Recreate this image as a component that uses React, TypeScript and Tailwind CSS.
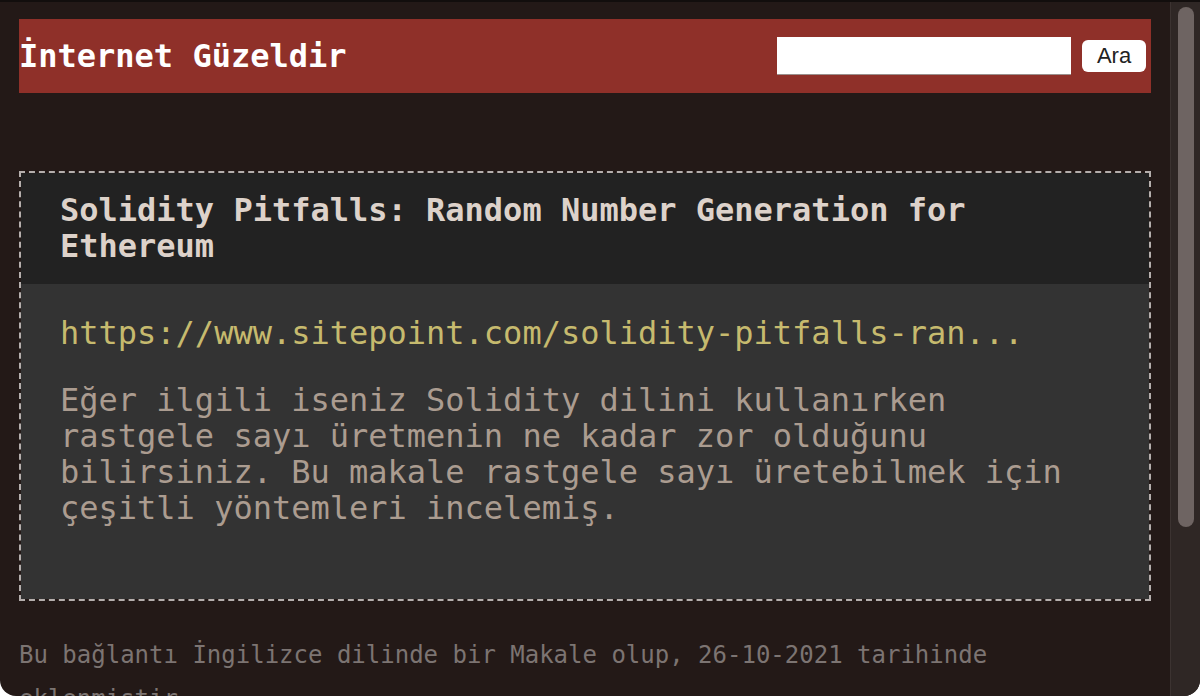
import React from "react";

const mono = { fontFamily: '"DejaVu Sans Mono", "Liberation Mono", monospace' };

export default function App() {
  return (
    <div className="h-[696px] w-[1200px] overflow-hidden bg-white">
      <div className="flex h-full overflow-hidden rounded-b-[16px] border-t-2 border-[#120e0d] bg-[#231917]">
        <main className="flex-1 px-[19px] pt-[17px]" style={mono}>
          <header className="flex h-[74px] items-center justify-between bg-[#8f3029] pb-[1px] pr-[5px]">
            <h1 className="text-[32px] font-bold leading-[36px] text-white">İnternet Güzeldir</h1>
            <form className="flex items-center gap-[11px] pt-[1px]" onSubmit={(e) => e.preventDefault()}>
              <input
                type="text"
                className="h-[38px] w-[294px] border-b border-[#9a8f8c] bg-white outline-none"
              />
              <button
                type="submit"
                className="h-[32px] w-[64px] rounded-[6px] bg-white text-[22px] leading-[32px] text-[#222]"
                style={{ fontFamily: '"Liberation Sans", Arial, sans-serif' }}
              >
                Ara
              </button>
            </form>
          </header>

          <article className="mt-[78px] border-2 border-dashed border-[#b5afad]">
            <div className="bg-[#222222] px-[39px] pb-5 pt-[19px]">
              <h2 className="text-[32px] font-bold leading-[36px] text-[#ddd2ca]">
                Solidity Pitfalls: Random Number Generation for Ethereum
              </h2>
            </div>
            <div className="bg-[#333333] px-[39px] pb-[73px] pt-[31px]">
              <a className="block text-[32px] leading-[36px] text-[#c6ba6e]">
                https://www.sitepoint.com/solidity-pitfalls-ran...
              </a>
              <p className="mt-[31px] text-[32px] leading-[36px] text-[#ab9c90]">
                Eğer ilgili iseniz Solidity dilini kullanırken rastgele sayı üretmenin ne kadar zor olduğunu bilirsiniz. Bu makale rastgele sayı üretebilmek için çeşitli yöntemleri incelemiş.
              </p>
            </div>
          </article>

          <p className="mt-[32px] text-[24px] leading-[44px] text-[#7c7472]">
            Bu bağlantı İngilizce dilinde bir Makale olup, 26-10-2021 tarihinde eklenmiştir.
          </p>
        </main>

        <div className="w-[30px] border-l border-[#3c3331] bg-[#2f2725] pl-[7px] pt-[5px]">
          <div className="h-[520px] w-[16px] rounded-full bg-[#6e6462]" />
        </div>
      </div>
    </div>
  );
}
